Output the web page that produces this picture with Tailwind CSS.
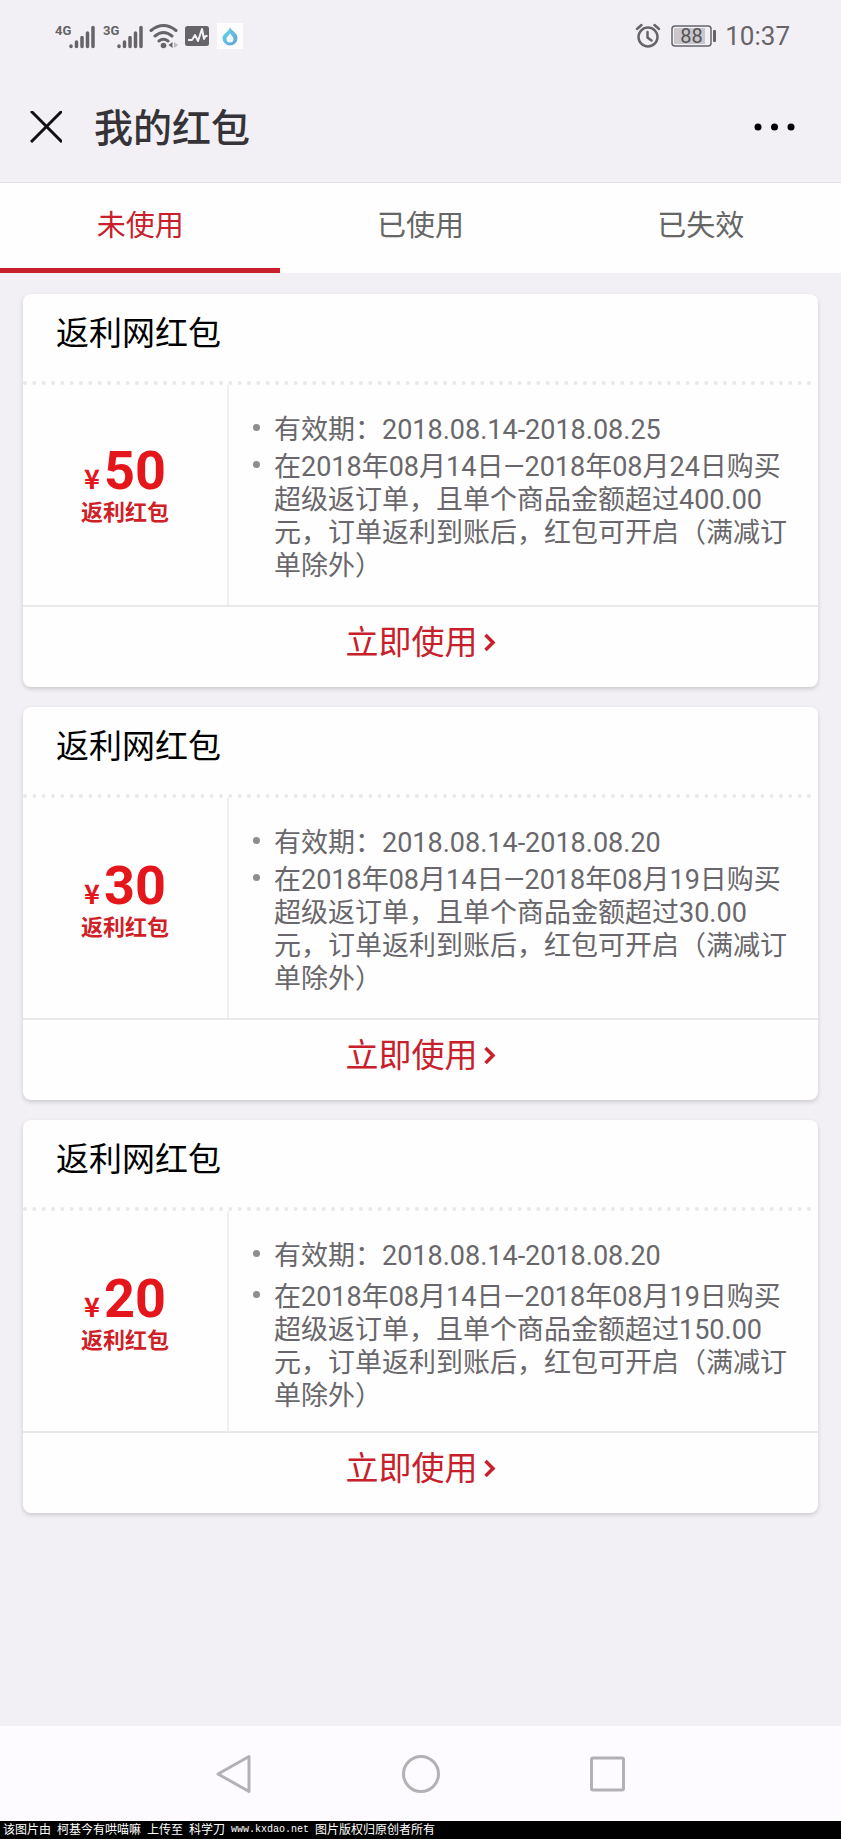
<!DOCTYPE html>
<html lang="zh-CN">
<head>
  <meta charset="UTF-8">
  <meta name="viewport" content="width=device-width, initial-scale=1.0">
  <script src="https://cdn.jsdelivr.net/npm/@tailwindcss/browser@4"></script>
  <title>我的红包</title>
</head>
<body class="min-h-screen flex flex-col bg-[#f2f0f4] font-[Roboto,'Noto_Sans_CJK_SC',sans-serif]">

  <!-- status bar -->
  <div class="h-[72px] shrink-0 flex items-center justify-between pl-[55px] pr-[51px] text-[#666468]">
    <div class="flex items-center">
      <svg class="w-10 h-[26px]" viewBox="0 0 40 26" fill="none" stroke="currentColor" stroke-width="3.500" stroke-linecap="round">
        <text x="0" y="12" font-size="13" font-weight="700" font-family="Roboto" fill="currentColor" stroke="none">4G</text>
        <path d="M16 23v.5M21.500 19v4.500M27 14.500v9M32.500 10v13.500M38 4.500v19"/>
      </svg>
      <svg class="ml-2 w-10 h-[26px]" viewBox="0 0 40 26" fill="none" stroke="currentColor" stroke-width="3.500" stroke-linecap="round">
        <text x="0" y="12" font-size="13" font-weight="700" font-family="Roboto" fill="currentColor" stroke="none">3G</text>
        <path d="M16 23v.5M21.500 19v4.500M27 14.500v9M32.500 10v13.500M38 4.500v19"/>
      </svg>
      <svg class="ml-1.5 w-[30px] h-[26px]" viewBox="0 0 30 26" fill="none" stroke="currentColor" stroke-width="3" stroke-linecap="round">
        <path d="M2 7.500Q14.500-2.500 27 7.500M6 13Q14.500 6 23 13M10 18Q14.500 14.500 19 18"/>
        <circle cx="14.500" cy="22.500" r="2.800" fill="currentColor" stroke="none"/>
        <path d="M23.500 19v6l-4-3z" fill="currentColor" stroke="none"/>
        <path d="M25 19v6l4-3z" fill="#bbb9bd" stroke="none"/>
      </svg>
      <svg class="ml-1.5 w-6 h-[26px]" viewBox="0 0 24 26" fill="none">
        <rect y="3" width="24" height="20" rx="2.500" fill="currentColor"/>
        <path d="M3 17h4l3-5 3 6 4-12 2 10 1.500-3h2" stroke="#f2f0f4" stroke-width="2" stroke-linejoin="round"/>
      </svg>
      <svg class="ml-2 w-[26px] h-[26px]" viewBox="0 0 26 26">
        <defs>
          <linearGradient id="drop" x1="0" y1="0" x2="1" y2="1">
            <stop offset="0.200" stop-color="#5cd0e4"/>
            <stop offset="1" stop-color="#6c9ad6"/>
          </linearGradient>
        </defs>
        <rect width="26" height="26" fill="#fdfdfe"/>
        <path d="M13 4.500C15 8 20.500 10 20.500 15a7.500 7.500 0 0 1-15 0C5.500 11 11.500 9 13 4.500z" fill="url(#drop)"/>
        <path d="M13 10c1 2.500 3.500 3.500 3.500 6a3.500 3.500 0 0 1-7 0c0-2.500 2.800-3.500 3.500-6z" fill="#f1fafc"/>
      </svg>
    </div>
    <div class="flex items-center">
      <svg class="w-[26px] h-[26px]" viewBox="0 0 26 26" fill="none" stroke="currentColor" stroke-width="2.500" stroke-linecap="round">
        <circle cx="13" cy="14" r="9.500"/>
        <path d="M12.500 9v5.500l4 3M2 6l4.500-4M24 6l-4.500-4"/>
      </svg>
      <svg class="ml-2.5 w-[46px] h-[26px]" viewBox="0 0 46 26">
        <rect x="1" y="3" width="39" height="20" rx="3" fill="none" stroke="currentColor" stroke-width="1.500"/>
        <rect x="3" y="5" width="31" height="16" fill="#c9c7cb"/>
        <rect x="42" y="7" width="3" height="12" rx="1" fill="currentColor"/>
        <text x="20.500" y="20" text-anchor="middle" font-size="20" font-family="Roboto" fill="#555357">88</text>
      </svg>
      <span class="ml-2 text-[26px] leading-8">10:37</span>
    </div>
  </div>

  <!-- title bar -->
  <header class="h-[111px] shrink-0 flex items-center pl-[30px] pr-[45px] border-b border-[#e2e0e4]">
    <button type="button" aria-label="关闭">
      <svg class="w-8 h-8" viewBox="0 0 32 32" fill="none" stroke="#111" stroke-width="3"><path d="M1 0l31 31M32 0L1 31"/></svg>
    </button>
    <h1 class="ml-8 pt-1 text-[39px] leading-[48px] font-medium text-[#353338]">我的红包</h1>
    <button type="button" class="ml-auto" aria-label="更多">
      <svg class="w-[42px] h-4" viewBox="0 0 42 16" fill="#000"><circle cx="4" cy="8" r="3.500"/><circle cx="20.500" cy="8" r="3.500"/><circle cx="37" cy="8" r="3.500"/></svg>
    </button>
  </header>

  <!-- tabs -->
  <nav class="grid grid-cols-3 bg-[#fefefe] text-[29px] leading-[42px] text-[#666]">
    <button type="button" class="pt-[22px] pb-[21px] border-b-5 border-[#c8202a] text-[#c8202a]">未使用</button>
    <button type="button" class="pt-[22px] pb-[21px] border-b-5 border-transparent">已使用</button>
    <button type="button" class="pt-[22px] pb-[21px] border-b-5 border-transparent">已失效</button>
  </nav>

  <main class="grow flex flex-col gap-5 px-[23px] pt-[21px]">
    <section class="bg-[#fefefe] rounded-lg shadow-[0_2px_4px_rgba(0,0,0,0.16)]">
      <h2 class="h-[87px] pt-4 pl-[33px] text-[33px] leading-[48px] text-black">返利网红包</h2>
      <svg class="block w-full h-1"><line x1="2" y1="2" x2="100%" y2="2" stroke="#e9e8eb" stroke-width="4" stroke-linecap="round" stroke-dasharray="0 9.333"/></svg>
      <div class="flex h-[222px] border-b-2 border-[#e9e8eb]">
        <div class="w-[206px] shrink-0 flex flex-col items-center justify-center pb-4 border-r-2 border-[#f0eff2] font-bold text-[#e4151b]">
          <p class="text-[54px] leading-[52px]"><span class="mr-1 text-[27px] leading-none font-['Noto_Sans_CJK_SC',sans-serif]">¥</span>50</p>
          <p class="text-[22px] leading-8 text-[#cf2026]">返利红包</p>
        </div>
        <ul class="grow pt-[29px] pl-[45px] pr-6 list-none text-[27px] leading-[33px] text-[#69676b]">
          <li class="relative mb-1 before:absolute before:-left-[21px] before:top-[10px] before:size-[7px] before:rounded-full before:bg-[#8f8d91]">有效期：2018.08.14-2018.08.25</li>
          <li class="relative before:absolute before:-left-[21px] before:top-[10px] before:size-[7px] before:rounded-full before:bg-[#8f8d91]">在2018年08月14日—2018年08月24日购买超级返订单，且单个商品金额超过400.00元，订单返利到账后，红包可开启（满减订单除外）</li>
        </ul>
      </div>
      <a href="#" class="h-20 pb-2 flex items-center justify-center gap-1.5 text-[33px] leading-[48px] text-[#c8202a]">立即使用
        <svg class="w-3 h-5" viewBox="0 0 12 20" fill="none" stroke="currentColor" stroke-width="3.500"><path d="M1.500 2l7.500 7.500-7.500 7.500"/></svg>
      </a>
    </section>

    <section class="bg-[#fefefe] rounded-lg shadow-[0_2px_4px_rgba(0,0,0,0.16)]">
      <h2 class="h-[87px] pt-4 pl-[33px] text-[33px] leading-[48px] text-black">返利网红包</h2>
      <svg class="block w-full h-1"><line x1="2" y1="2" x2="100%" y2="2" stroke="#e9e8eb" stroke-width="4" stroke-linecap="round" stroke-dasharray="0 9.333"/></svg>
      <div class="flex h-[222px] border-b-2 border-[#e9e8eb]">
        <div class="w-[206px] shrink-0 flex flex-col items-center justify-center pb-3 border-r-2 border-[#f0eff2] font-bold text-[#e4151b]">
          <p class="text-[54px] leading-[52px]"><span class="mr-1 text-[27px] leading-none font-['Noto_Sans_CJK_SC',sans-serif]">¥</span>30</p>
          <p class="text-[22px] leading-8 text-[#cf2026]">返利红包</p>
        </div>
        <ul class="grow pt-[29px] pl-[45px] pr-6 list-none text-[27px] leading-[33px] text-[#69676b]">
          <li class="relative mb-1 before:absolute before:-left-[21px] before:top-[10px] before:size-[7px] before:rounded-full before:bg-[#8f8d91]">有效期：2018.08.14-2018.08.20</li>
          <li class="relative before:absolute before:-left-[21px] before:top-[10px] before:size-[7px] before:rounded-full before:bg-[#8f8d91]">在2018年08月14日—2018年08月19日购买超级返订单，且单个商品金额超过30.00元，订单返利到账后，红包可开启（满减订单除外）</li>
        </ul>
      </div>
      <a href="#" class="h-20 pb-2 flex items-center justify-center gap-1.5 text-[33px] leading-[48px] text-[#c8202a]">立即使用
        <svg class="w-3 h-5" viewBox="0 0 12 20" fill="none" stroke="currentColor" stroke-width="3.500"><path d="M1.500 2l7.500 7.500-7.500 7.500"/></svg>
      </a>
    </section>

    <section class="bg-[#fefefe] rounded-lg shadow-[0_2px_4px_rgba(0,0,0,0.16)]">
      <h2 class="h-[87px] pt-4 pl-[33px] text-[33px] leading-[48px] text-black">返利网红包</h2>
      <svg class="block w-full h-1"><line x1="2" y1="2" x2="100%" y2="2" stroke="#e9e8eb" stroke-width="4" stroke-linecap="round" stroke-dasharray="0 9.333"/></svg>
      <div class="flex h-[222px] border-b-2 border-[#e9e8eb]">
        <div class="w-[206px] shrink-0 flex flex-col items-center justify-center pb-3 border-r-2 border-[#f0eff2] font-bold text-[#e4151b]">
          <p class="text-[54px] leading-[52px]"><span class="mr-1 text-[27px] leading-none font-['Noto_Sans_CJK_SC',sans-serif]">¥</span>20</p>
          <p class="text-[22px] leading-8 text-[#cf2026]">返利红包</p>
        </div>
        <ul class="grow pt-[29px] pl-[45px] pr-6 list-none text-[27px] leading-[33px] text-[#69676b]">
          <li class="relative mb-2 before:absolute before:-left-[21px] before:top-[10px] before:size-[7px] before:rounded-full before:bg-[#8f8d91]">有效期：2018.08.14-2018.08.20</li>
          <li class="relative before:absolute before:-left-[21px] before:top-[10px] before:size-[7px] before:rounded-full before:bg-[#8f8d91]">在2018年08月14日—2018年08月19日购买超级返订单，且单个商品金额超过150.00元，订单返利到账后，红包可开启（满减订单除外）</li>
        </ul>
      </div>
      <a href="#" class="h-20 pb-2 flex items-center justify-center gap-1.5 text-[33px] leading-[48px] text-[#c8202a]">立即使用
        <svg class="w-3 h-5" viewBox="0 0 12 20" fill="none" stroke="currentColor" stroke-width="3.500"><path d="M1.500 2l7.500 7.500-7.500 7.500"/></svg>
      </a>
    </section>
  </main>

  <!-- system keys -->
  <nav class="h-[95px] shrink-0 flex items-center justify-center gap-[147px] bg-[#fdfbff]">
    <button type="button" aria-label="返回">
      <svg class="size-10" viewBox="0 0 40 40" fill="none" stroke="#b3b1b4" stroke-width="3" stroke-linejoin="round"><path d="M35 2.500v35L4 20z"/></svg>
    </button>
    <button type="button" aria-label="主页">
      <svg class="size-10" viewBox="0 0 40 40" fill="none" stroke="#b3b1b4" stroke-width="3"><circle cx="20" cy="20" r="17.500"/></svg>
    </button>
    <button type="button" aria-label="最近任务">
      <svg class="size-10" viewBox="0 0 40 40" fill="none" stroke="#b3b1b4" stroke-width="3"><rect x="3.500" y="4" width="32" height="32" rx="1.500"/></svg>
    </button>
  </nav>

  <footer class="h-[18px] shrink-0 flex items-center gap-1.5 pl-[3px] bg-black text-white text-[12px] leading-[18px]">
    <span>该图片由</span>
    <span>柯基今有哄喵嘛</span>
    <span>上传至</span>
    <span>科学刀</span>
    <span class="text-[10px] font-['Liberation_Mono',monospace]">www.kxdao.net</span>
    <span>图片版权归原创者所有</span>
  </footer>
</body>
</html>
